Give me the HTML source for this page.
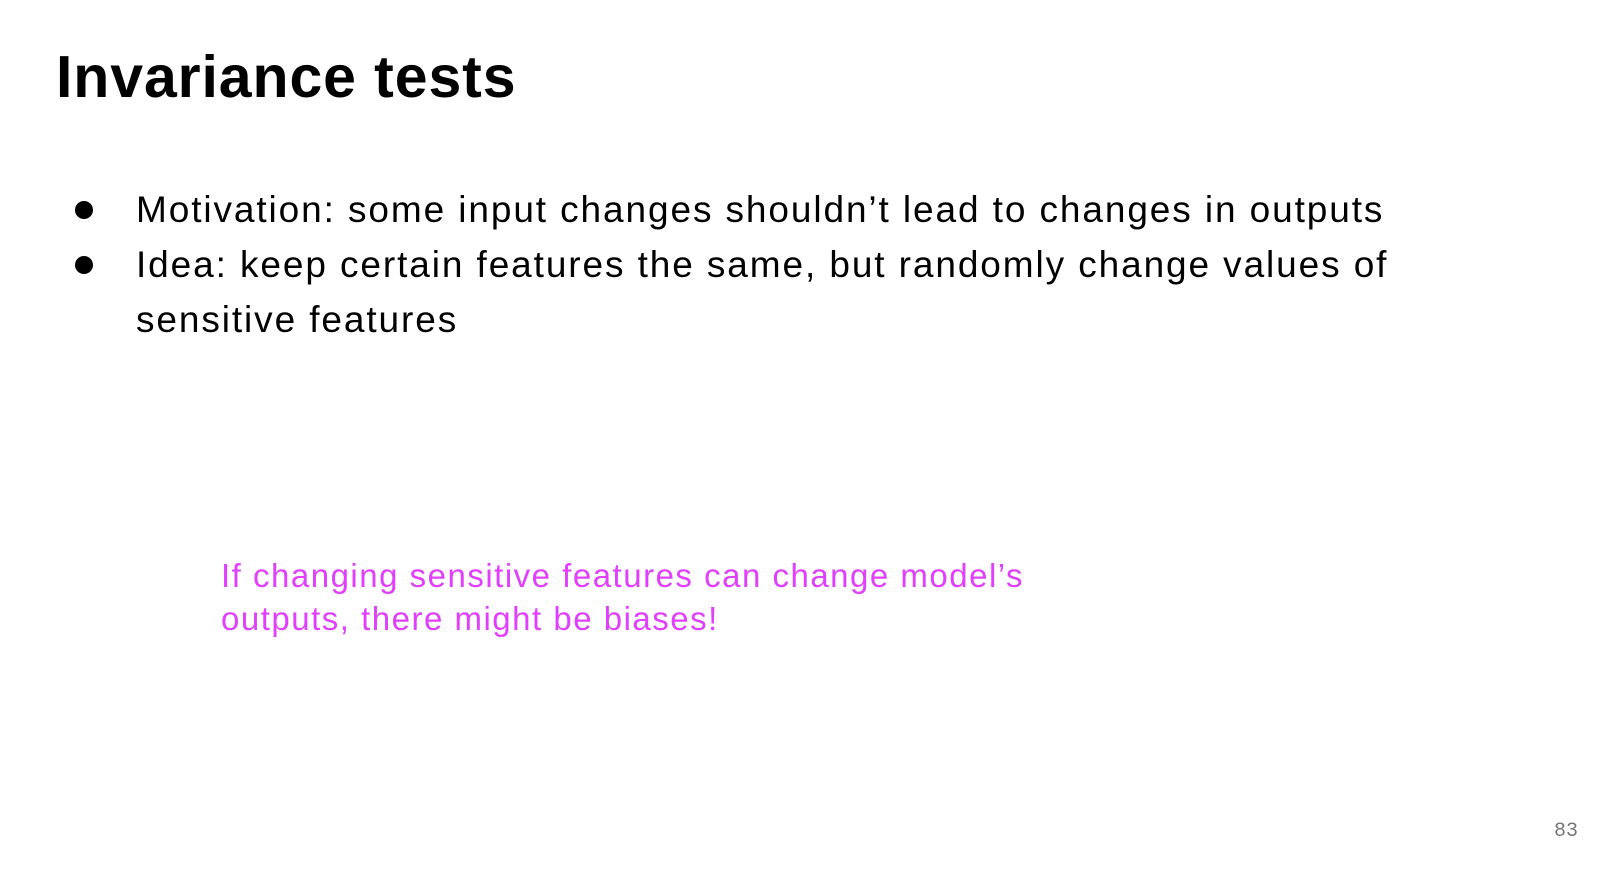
<!DOCTYPE html>
<html><head><meta charset="utf-8"><style>
html,body{margin:0;padding:0;background:#fff;}
body{width:1598px;height:874px;position:relative;overflow:hidden;font-family:"Liberation Sans",sans-serif;color:#000;}
.t{position:absolute;left:56px;top:40px;font-size:59px;font-weight:bold;line-height:74px;white-space:nowrap;letter-spacing:0.9px;}
.b{position:absolute;left:136px;font-size:37px;line-height:55px;white-space:nowrap;letter-spacing:1.9px;}
.dot{position:absolute;left:75px;width:18px;height:18px;border-radius:50%;background:#000;}
.p{position:absolute;left:221px;top:554px;font-size:33px;line-height:43px;color:#e040fb;white-space:nowrap;letter-spacing:1.5px;}
.n{position:absolute;right:20px;top:820px;font-size:20px;color:#777;font-family:"Liberation Mono",monospace;}
</style></head><body>
<div class="t">Invariance tests</div>
<div class="dot" style="top:201px"></div>
<div class="b" style="top:182px">Motivation: some input changes shouldn’t lead to changes in outputs</div>
<div class="dot" style="top:256px"></div>
<div class="b" style="top:237px">Idea: keep certain features the same, but randomly change values of<br>sensitive features</div>
<div class="p">If changing sensitive features can change model’s<br>outputs, there might be biases!</div>
<div class="n">83</div>
</body></html>
